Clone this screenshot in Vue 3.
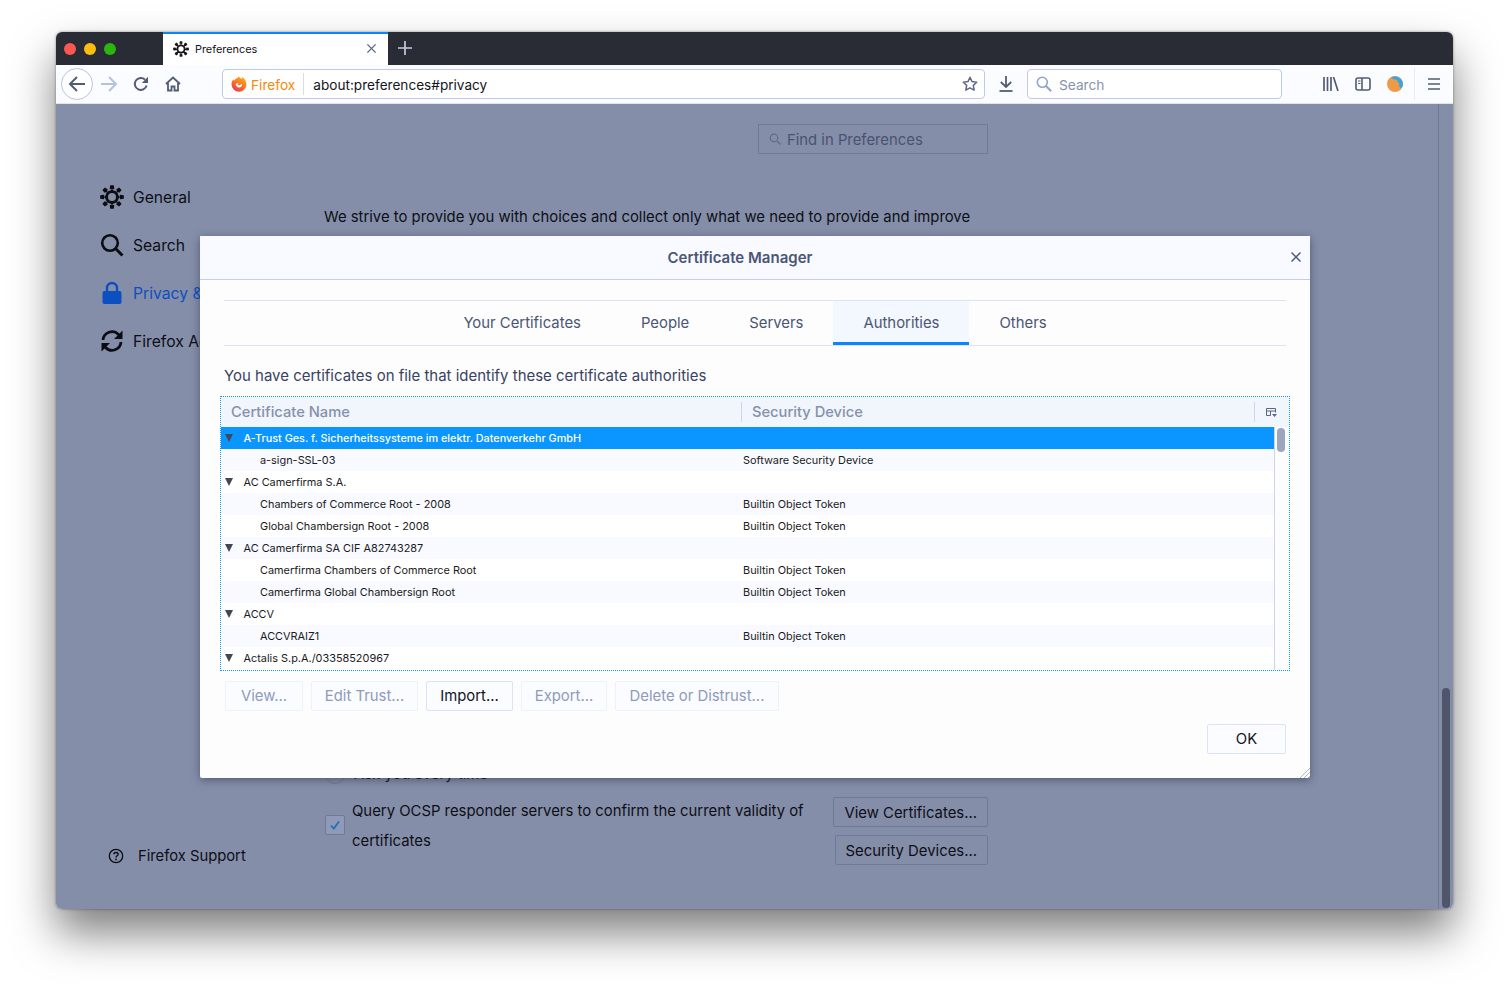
<script setup>
const rows = [
  { t: 'A-Trust Ges. f. Sicherheitssysteme im elektr. Datenverkehr GmbH', g: 1, sel: 1 },
  { t: 'a-sign-SSL-03', d: 'Software Security Device' },
  { t: 'AC Camerfirma S.A.', g: 1 },
  { t: 'Chambers of Commerce Root - 2008', d: 'Builtin Object Token' },
  { t: 'Global Chambersign Root - 2008', d: 'Builtin Object Token' },
  { t: 'AC Camerfirma SA CIF A82743287', g: 1 },
  { t: 'Camerfirma Chambers of Commerce Root', d: 'Builtin Object Token' },
  { t: 'Camerfirma Global Chambersign Root', d: 'Builtin Object Token' },
  { t: 'ACCV', g: 1 },
  { t: 'ACCVRAIZ1', d: 'Builtin Object Token' },
  { t: 'Actalis S.p.A./03358520967', g: 1 },
]
const tabs = ['Your Certificates', 'People', 'Servers', 'Authorities', 'Others']
const actions = [
  { t: 'View...', w: 78, off: 1 },
  { t: 'Edit Trust...', w: 107, off: 1 },
  { t: 'Import...', w: 87 },
  { t: 'Export...', w: 86, off: 1 },
  { t: 'Delete or Distrust...', w: 164, off: 1 },
]
function gear() {
  const c = 12, n = 8
  let d = ''
  for (let i = 0; i < n; i++) {
    const a = (i / n) * Math.PI * 2
    const pts = [[-2.3, 8.2], [-1.8, 11.8], [1.8, 11.8], [2.3, 8.2]]
    pts.forEach(([x, y], j) => {
      const px = c + x * Math.cos(a) - y * Math.sin(a)
      const py = c + x * Math.sin(a) + y * Math.cos(a)
      d += (i === 0 && j === 0 ? 'M' : 'L') + px.toFixed(2) + ' ' + py.toFixed(2)
    })
  }
  return d + 'ZM12 8a4 4 0 1 0 0 8a4 4 0 1 0 0-8Z'
}
const gearD = gear()
</script>

<template>
  <div class="page">
    <div class="window">
      <header class="titlebar">
        <div class="lights">
          <span class="light red"></span>
          <span class="light yellow"></span>
          <span class="light green"></span>
        </div>
        <div class="tab">
          <svg class="tab-gear" viewBox="0 0 24 24"><path :d="gearD" fill="#15161c" fill-rule="evenodd" /></svg>
          <span class="tab-label">Preferences</span>
          <svg class="tab-close" viewBox="0 0 12 12"><path d="M1.5 1.5l9 9M10.5 1.5l-9 9" stroke="#5c6782" stroke-width="1.5" /></svg>
        </div>
        <svg class="plus" viewBox="0 0 14 14"><path d="M7 0v14M0 7h14" stroke="#c3cce0" stroke-width="1.7" /></svg>
      </header>

      <nav class="toolbar">
        <div class="back">
          <svg viewBox="0 0 18 18" width="18" height="18"><path d="M17 9H2M9 2L2 9l7 7" fill="none" stroke="#525c74" stroke-width="2" /></svg>
        </div>
        <svg class="tool forward" viewBox="0 0 18 18" width="18" height="18"><path d="M1 9h15M9 2l7 7-7 7" fill="none" stroke="#b3c2df" stroke-width="2" /></svg>
        <svg class="tool reload" viewBox="0 0 16 16" width="16" height="16"><path d="M13.6 9.5A6 6 0 1 1 12 3.6" fill="none" stroke="#525c74" stroke-width="2" /><path d="M15 0.8V7H8.8Z" fill="#525c74" /></svg>
        <svg class="tool home" viewBox="0 0 16 16" width="16" height="16"><path d="M1 8l7-6.500 7 6.500M3 7v7.500h3.500V10.500h3v4H13V7" fill="none" stroke="#525c74" stroke-width="1.800" /></svg>

        <div class="urlbar">
          <svg class="fx" viewBox="0 0 16 16" width="16" height="16">
            <defs>
              <linearGradient id="fxg" x1="0.800" y1="0" x2="0.200" y2="1">
                <stop offset="0" stop-color="#ffb21e" />
                <stop offset="0.600" stop-color="#f7671f" />
                <stop offset="1" stop-color="#e8326c" />
              </linearGradient>
            </defs>
            <path d="M8 .5c.6 1.500 2 1.700 3 2.300.200-.600.200-1.300.100-1.900C13.600 2.400 15.500 5 15.500 8.200A7.500 7.500 0 0 1 .5 8.200C.5 6 1.400 4.200 2.500 3.200c0 .700.200 1.200.500 1.600C3.700 3 6.200 2.500 8 .5Z" fill="url(#fxg)" />
            <path d="M4.700 8c.800-.800 2-1.100 3-.600l-1.200 1c.6.900 2 .9 2.900.500.400-.200.600-.700.300-1.100l1.300.600c.1 1.700-1.200 3.100-3 3.100-1.700 0-3-1.300-3.300-3.500Z" fill="#fff" />
          </svg>
          <span class="fx-name">Firefox</span>
          <span class="url-div"></span>
          <span class="url">about:preferences#privacy</span>
          <svg class="star" viewBox="0 0 16 16" width="16" height="16"><path d="M8 1.300l2 4.300 4.700.6-3.400 3.200.9 4.700L8 11.800l-4.200 2.300.9-4.700L1.300 6.200 6 5.600Z" fill="none" stroke="#5d6986" stroke-width="1.500" stroke-linejoin="round" /></svg>
        </div>
        <svg class="download" viewBox="0 0 14 16" width="14" height="16"><path d="M7 0v11M1.800 6L7 11l5.200-5" fill="none" stroke="#525c74" stroke-width="1.800" /><path d="M.5 15h13" stroke="#525c74" stroke-width="1.800" /></svg>
        <div class="searchbar">
          <svg viewBox="0 0 16 16" width="16" height="16"><circle cx="6.300" cy="6.300" r="5" fill="none" stroke="#92a3c4" stroke-width="1.600" /><path d="M10 10l5.200 5.200" stroke="#92a3c4" stroke-width="2" /></svg>
          <span>Search</span>
        </div>
        <svg class="library" viewBox="0 0 16 14" width="16" height="14"><path d="M1 0v14M4.500 0v14M8 0v14M10.500 0l4.500 14" fill="none" stroke="#525c74" stroke-width="1.700" /></svg>
        <svg class="side" viewBox="0 0 16 14" width="16" height="14"><rect x="1" y="1" width="14" height="12" rx="2" fill="none" stroke="#525c74" stroke-width="1.600" /><path d="M7 1v12" stroke="#525c74" stroke-width="1.600" /><path d="M3 4h2.500M3 6.500h2.500" stroke="#525c74" stroke-width="1.200" /></svg>
        <svg class="avatar" viewBox="0 0 16 16" width="16" height="16"><circle cx="8" cy="8" r="8" fill="#ee9a46" /><path d="M4 1.500A8 8 0 0 1 16 8c0 2-1 3.500-2.500 4.500-.2-1.500-1-2-1.800-2.300 1-.8 1-2.300-.3-2.800.400-.8-.3-1.400-1-1.400.8-.8.300-1.800-.8-2-.8-.2-3.600-.3-5.600-2.500Z" fill="#36a5e8" /></svg>
        <span class="tool-sep"></span>
        <svg class="menu" viewBox="0 0 12 12" width="12" height="12"><path d="M0 1h12M0 6h12M0 11h12" stroke="#525c74" stroke-width="1.600" /></svg>
      </nav>

      <section class="content">
        <aside class="sidebar">
          <div class="cat">
            <svg viewBox="0 0 24 24" width="24" height="24"><path :d="gearD" fill="#0c0d12" fill-rule="evenodd" /></svg>
            <span>General</span>
          </div>
          <div class="cat">
            <svg viewBox="0 0 24 24" width="24" height="24"><circle cx="10" cy="10" r="7.800" fill="none" stroke="#0c0d12" stroke-width="2.600" /><path d="M15.500 15.500l7 7" stroke="#0c0d12" stroke-width="3" /></svg>
            <span>Search</span>
          </div>
          <div class="cat active">
            <svg viewBox="0 0 24 24" width="24" height="24"><path d="M7 11V7a5 5 0 0 1 10 0v4" fill="none" stroke="#0b4fc0" stroke-width="2.400" /><rect x="2.500" y="10" width="19" height="13" rx="2" fill="#0b4fc0" /></svg>
            <span>Privacy &amp; Security</span>
          </div>
          <div class="cat">
            <svg viewBox="0 0 24 24" width="24" height="24"><path d="M3 11a9 9 0 0 1 15.500-5.500L21 8M21 13a9 9 0 0 1-15.500 5.500L3 16" fill="none" stroke="#0c0d12" stroke-width="2.800" /><path d="M22.500 1.500V10H14ZM1.500 22.500V14H10Z" fill="#0c0d12" /></svg>
            <span>Firefox Account</span>
          </div>
          <div class="support">
            <svg viewBox="0 0 16 16" width="16" height="16"><circle cx="8" cy="8" r="6.700" fill="none" stroke="#0c0d12" stroke-width="1.300" /><path d="M5.800 6.300C5.800 3.800 10.200 3.800 10.200 6.300 10.200 7.800 8 7.800 8 9.500" fill="none" stroke="#0c0d12" stroke-width="1.400" /><circle cx="8" cy="11.500" r="0.900" fill="#0c0d12" /></svg>
            <span>Firefox Support</span>
          </div>
        </aside>

        <main class="main">
          <div class="find">
            <svg viewBox="0 0 12 12" width="12" height="12"><circle cx="5" cy="5" r="3.800" fill="none" stroke="#5f6b8a" stroke-width="1.200" /><path d="M8 8l3.500 3.500" stroke="#5f6b8a" stroke-width="1.400" /></svg>
            <span>Find in Preferences</span>
          </div>
          <p class="strive">We strive to provide you with choices and collect only what we need to provide and improve</p>
          <div class="radio-row">
            <span class="radio"></span>
            <span>Ask you every time</span>
          </div>
          <div class="ocsp">
            <div class="check">
              <svg viewBox="0 0 12 12" width="12" height="12"><path d="M2 6.500l2.800 3L10 2.500" fill="none" stroke="#2a6db0" stroke-width="1.800" /></svg>
            </div>
            <div class="ocsp-text">
              <div>Query OCSP responder servers to confirm the current validity of</div>
              <div>certificates</div>
            </div>
            <div class="ocsp-btns">
              <button class="dim-btn">View Certificates...</button>
              <button class="dim-btn">Security Devices...</button>
            </div>
          </div>
        </main>

        <div class="page-scroll"><span class="page-thumb"></span></div>

        <div class="dialog">
          <div class="dlg-head">
            <span class="dlg-title">Certificate Manager</span>
            <svg class="dlg-close" viewBox="0 0 10 10" width="10" height="10"><path d="M.5 .5l9 9M9.500 .5l-9 9" stroke="#4f5e80" stroke-width="1.500" /></svg>
          </div>
          <div class="dlg-body">
            <div class="tabs">
              <span v-for="(t, i) in tabs" :key="t" class="dtab" :class="{ on: i === 3 }">{{ t }}</span>
            </div>
            <p class="desc">You have certificates on file that identify these certificate authorities</p>
            <div class="tree">
              <div class="tree-head">
                <span class="col-a">Certificate Name</span>
                <span class="col-b">Security Device</span>
                <svg class="picker" viewBox="0 0 11 10" width="11" height="10"><path d="M.5 7.500v-7h9v4M.5 3h9M4.500 3v4.500H.5" fill="none" stroke="#5c6680" stroke-width="1" /><path d="M6 6h5L8.500 9Z" fill="#5c6680" /></svg>
              </div>
              <div class="tree-body">
                <div class="tree-rows">
                  <div v-for="(r, i) in rows" :key="r.t" class="row" :class="{ sel: r.sel, alt: i % 2 === 1 }">
                    <span class="name" :class="{ group: r.g }">
                      <i v-if="r.g" class="twisty"></i>{{ r.t }}
                    </span>
                    <span v-if="r.d" class="dev">{{ r.d }}</span>
                  </div>
                </div>
                <div class="tree-scroll"><span class="tree-thumb"></span></div>
              </div>
            </div>
            <div class="actions">
              <button v-for="a in actions" :key="a.t" class="act" :class="{ off: a.off }" :style="{ width: a.w + 'px' }">{{ a.t }}</button>
            </div>
            <div class="foot"><button class="act ok">OK</button></div>
          </div>
          <svg class="grip" viewBox="0 0 10 10" width="10" height="10"><path d="M0 10L10 0M4 10l6-6M8 10l2-2" stroke="#aab6d0" stroke-width="1" /></svg>
        </div>
      </section>
    </div>
  </div>
</template>

<style>
html, body { margin: 0; overflow: hidden; background: #fff; }
</style>

<style scoped>
.page {
  height: 989px;
  box-sizing: border-box;
  padding: 32px 56px 0;
  font-family: Inter, "Liberation Sans", sans-serif;
  background: #fff;
}
.window {
  height: 877px;
  border-radius: 6px;
  display: flex;
  flex-direction: column;
  box-shadow: 0 24px 44px rgba(0, 0, 0, .5), 0 0 3px rgba(0, 0, 0, .4);
}
.titlebar {
  height: 33px;
  flex: none;
  background: #2a2c35;
  border-radius: 6px 6px 0 0;
  display: flex;
  align-items: stretch;
}
.lights { width: 107px; display: flex; align-items: center; gap: 8px; padding-left: 8px; box-sizing: border-box; }
.light { width: 12px; height: 12px; border-radius: 50%; }
.red { background: #fc5753; }
.yellow { background: #fdbc10; }
.green { background: #2ab50f; }
.tab {
  width: 225px;
  background: #fff;
  border-top: 2px solid #0a84ff;
  box-sizing: border-box;
  display: flex;
  align-items: center;
  padding: 0 0 2px 10px;
}
.tab-gear { width: 16px; height: 16px; }
.tab-label { font-size: 10.900px; color: #14151c; margin-left: 6px; flex: 1; }
.tab-close { width: 11px; height: 11px; margin-right: 11px; }
.plus { width: 14px; height: 14px; margin: 9px 0 0 10px; }
.toolbar {
  height: 39px;
  flex: none;
  background: #fbfcff;
  border-bottom: 1px solid #dfe4ef;
  box-sizing: border-box;
  display: flex;
  align-items: center;
  padding-left: 5px;
}
.back {
  width: 30px; height: 30px;
  border: 1px solid #b8c6e0;
  border-radius: 50%;
  background: #fff;
  display: flex; align-items: center; justify-content: center;
  flex: none;
  margin-top: -1px;
}
.forward { margin-left: 7px; }
.reload { margin-left: 15px; }
.home { margin-left: 16px; }
.urlbar {
  width: 763px; height: 30px;
  margin-left: 41px;
  box-sizing: border-box;
  border: 1px solid #bccbe6;
  border-radius: 4px;
  background: #fff;
  display: flex;
  align-items: center;
  padding-left: 8px;
}
.fx-name { font-size: 13.700px; color: #f28a0a; margin: 1px 0 0 4px; }
.url-div { width: 1px; height: 22px; background: #d5deee; margin: 0 9px 0 8px; }
.url { font-size: 13.600px; color: #14151c; flex: 1; margin-top: 1px; }
.star { margin-right: 6px; }
.download { margin-left: 14px; }
.searchbar {
  width: 255px; height: 30px;
  margin-left: 14px;
  box-sizing: border-box;
  border: 1px solid #bccbe6;
  border-radius: 4px;
  background: #fff;
  display: flex;
  align-items: center;
  padding-left: 8px;
  font-size: 13.700px;
  color: #8693b0;
}
.searchbar span { margin: 1px 0 0 7px; }
.library { margin-left: 41px; }
.side { margin-left: 16px; }
.avatar { margin-left: 16px; }
.tool-sep { width: 1px; height: 32px; background: #e6ebf5; margin-left: 11px; }
.menu { margin-left: 13px; }

.content {
  flex: 1;
  position: relative;
  display: flex;
  background: #848ea9;
  border-radius: 0 0 6px 6px;
  color: #0e0f16;
  font-size: 15px;
}
.sidebar { width: 268px; flex: none; position: relative; padding: 69px 0 0 44px; box-sizing: border-box; }
.cat { height: 48px; display: flex; align-items: center; gap: 9px; font-size: 15.700px; white-space: nowrap; }
.cat svg { flex: none; }
.active { color: #0b4fc0; }
.support {
  position: absolute; left: 52px; top: 743px;
  display: flex; align-items: center; gap: 14px; font-size: 14.770px;
}
.main { width: 664px; flex: none; }
.find {
  width: 230px; height: 30px;
  margin: 20px 0 0 434px;
  box-sizing: border-box;
  border: 1px solid #6f7a97;
  display: flex; align-items: center; padding-left: 10px; gap: 6px;
  color: #49536f;
  font-size: 14.830px;
}
.find span { margin-top: 2px; }
.strive { margin: 53px 0 0; font-size: 14.870px; line-height: 20px; white-space: nowrap; }
.radio-row { margin-top: 537px; height: 20px; display: flex; align-items: center; font-size: 14.870px; gap: 9px; }
.radio { width: 18px; height: 18px; border: 1px solid #6f7a97; border-radius: 50%; margin-left: 1px; }
.ocsp { margin-top: 13px; display: flex; position: relative; }
.check {
  width: 20px; height: 20px; margin-top: 18px; flex: none; margin-left: 1px;
  box-sizing: border-box;
  border: 1px solid #6f7a97; border-radius: 2px;
  background: #8e9ab8;
  display: flex; align-items: center; justify-content: center;
}
.ocsp-text { margin: -1px 0 0 7px; width: 475px; flex: none; font-size: 14.860px; line-height: 30px; white-space: nowrap; }
.ocsp-btns { display: flex; flex-direction: column; align-items: flex-end; gap: 8px; flex: 1; }
.dim-btn {
  height: 30px; padding: 2px 10px 0 10px;
  background: #848ea9;
  border: 1px solid #6f7a97;
  border-radius: 2px;
  font: 14.860px Inter, "Liberation Sans", sans-serif;
  color: #0e0f16;
  white-space: nowrap;
}
.page-scroll { position: absolute; right: 0; top: 0; bottom: 0; width: 15px; border-left: 1px solid #6f7a97; box-sizing: border-box; }
.page-thumb { position: absolute; left: 3px; top: 584px; width: 8px; height: 220px; border-radius: 4px; background: #4f566b; }

.dialog {
  position: absolute; left: 144px; top: 132px;
  width: 1110px; height: 542px;
  background: #fdfdfe;
  border-radius: 2px;
  box-shadow: 0 2px 8px rgba(40, 45, 70, .55);
  color: #14151c;
  display: flex;
  flex-direction: column;
}
.dlg-head {
  height: 44px; flex: none;
  box-sizing: border-box;
  background: #f8faff;
  border-bottom: 1px solid #c5cfe3;
  display: flex; align-items: center; justify-content: center;
  position: relative;
  padding-right: 30px;
}
.dlg-title { font-size: 15px; font-weight: 600; color: #4a5674; }
.dlg-close { position: absolute; right: 9px; top: 16px; }
.dlg-body { padding: 20px 24px 0; flex: 1; position: relative; }
.tabs {
  height: 46px;
  box-sizing: border-box;
  border-top: 1px solid #dce3f2;
  border-bottom: 1px solid #dce3f2;
  display: flex; justify-content: center;
}
.dtab {
  height: 44px;
  padding: 1px 30px 1px;
  box-sizing: border-box;
  display: flex; align-items: center;
  font-size: 14.870px;
  color: #4a5674;
}
.dtab.on { background: #f3f7fe; border-bottom: 3px solid #0a84ff; padding-top: 2px; padding-bottom: 0; }
.desc { margin: 20px 0 0; font-size: 14.970px; line-height: 20px; color: #39435f; white-space: nowrap; }
.tree {
  margin: 10px -4px 0;
  height: 275px;
  box-sizing: border-box;
  border: 1px dotted #0a95ff;
  display: flex; flex-direction: column;
  background: #fff;
}
.tree-head {
  height: 30px; flex: none;
  background: #f1f5fc;
  display: flex; align-items: center;
  font-size: 14.700px; font-weight: 500;
  color: #8691ac;
  position: relative;
}
.col-a { width: 521px; padding-left: 10px; box-sizing: border-box; flex: none; height: 20px; line-height: 20px; border-right: 1px solid #ccd6ea; }
.col-b { padding-left: 10px; line-height: 20px; }
.picker { position: absolute; right: 12px; top: 11px; }
.tree-head::after { content: ""; position: absolute; right: 34px; top: 5px; width: 1px; height: 20px; background: #ccd6ea; }
.tree-body { flex: 1; display: flex; min-height: 0; overflow: hidden; }
.tree-rows { flex: 1; min-width: 0; }
.row {
  height: 22px;
  display: flex; align-items: center;
  font-size: 10.900px;
  color: #1a1b22;
  white-space: nowrap;
}
.row.alt { background: #f8faff; }
.row.sel { background: #0a95ff; color: #fff; font-weight: 500; font-size: 10.850px; }
.name { width: 522px; flex: none; padding-left: 39px; box-sizing: border-box; display: flex; align-items: center; }
.name.group { padding-left: 4px; }
.twisty {
  width: 0; height: 0; margin-right: 10.500px;
  border-left: 4.500px solid transparent;
  border-right: 4.500px solid transparent;
  border-top: 8px solid #3f4759;
}
.tree-scroll { width: 14px; flex: none; border-left: 1px solid #ccd6ea; position: relative; background: #fdfdff; }
.tree-thumb { position: absolute; left: 2px; top: 1px; width: 8px; height: 24px; border-radius: 4px; background: #9ca6bf; }
.actions { display: flex; gap: 8px; margin-top: 10px; margin-left: 1px; }
.act {
  height: 30px; padding: 0;
  background: #fbfcff;
  border: 1px solid #dbe4f6;
  border-radius: 2px;
  font: 14.870px Inter, "Liberation Sans", sans-serif;
  color: #14151c;
}
.act.off { border-color: #edf1fa; color: #8f9bb9; }
.foot { display: flex; justify-content: flex-end; margin-top: 13px; }
.ok { width: 79px; }
.grip { position: absolute; right: 0; bottom: 0; }
</style>
